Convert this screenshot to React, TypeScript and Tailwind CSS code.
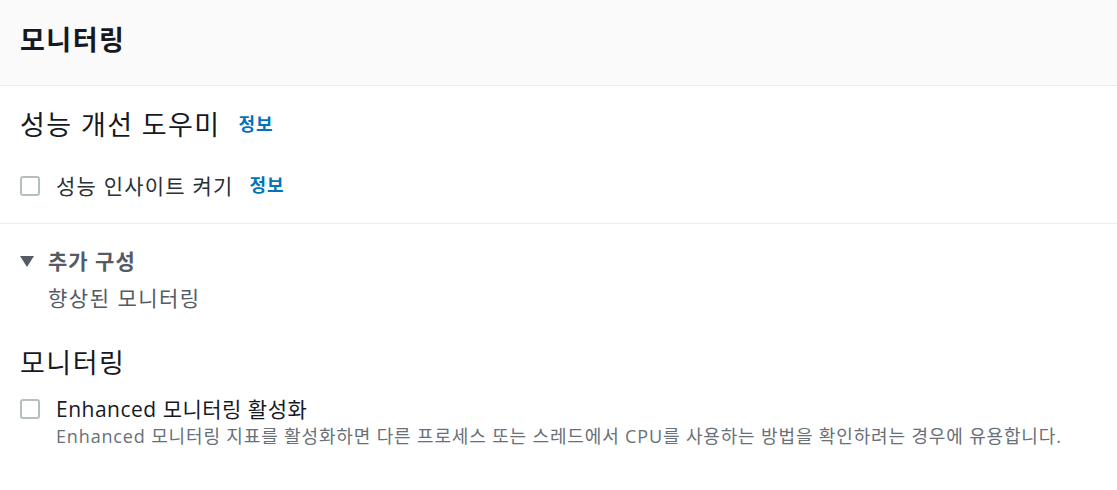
import React from "react";

const font = { fontFamily: '"Open Sans", "Noto Sans CJK KR", sans-serif' };

function Checkbox() {
    return <span className="block w-[20px] h-[20px] rounded-[3px] border-2 border-[#b4bfc0] bg-white shrink-0" />;
}

function InfoLink() {
    return <a className="text-[18px] font-bold text-[#0073bb] leading-none tracking-[1px] cursor-pointer">정보</a>;
}

export default function App() {
    return (
        <div className="w-[1117px] h-[490px] bg-white text-[#16191f]" style={font}>
            <div className="h-[86px] bg-[#fafafa] border-b border-[#eaeded] px-5 flex items-center pb-[6px]">
                <h2 className="text-[27px] font-bold leading-none tracking-[1.5px]">모니터링</h2>
            </div>

            <div className="px-5">
                <div className="h-[76px] flex items-center gap-[18px]">
                    <h3 className="text-[27px] leading-none tracking-[1.4px]">성능 개선 도우미</h3>
                    <InfoLink />
                </div>
                <div className="h-[48px] flex items-center">
                    <Checkbox />
                    <span className="ml-[16px] text-[21px] leading-none tracking-[1.2px] text-[#2b2f36]">성능 인사이트 켜기</span>
                    <span className="ml-4">
                        <InfoLink />
                    </span>
                </div>
            </div>

            <div className="mt-[13px] border-t border-[#eaeded]" />

            <div className="px-5">
                <div className="mt-[23px] h-[28px] flex items-center gap-[14px] text-[#545b64]">
                    <svg width="14" height="11" viewBox="0 0 14 11">
                        <polygon points="0,0 14,0 7,11" fill="#545b64" />
                    </svg>
                    <span className="text-[21px] font-bold leading-none tracking-[1px]">추가 구성</span>
                </div>
                <div className="mt-[9px] h-[28px] flex items-center pl-7 text-[21px] leading-none tracking-[1.5px] text-[#545b64]">
                    향상된 모니터링
                </div>

                <div className="mt-[32px] h-[36px] flex items-center">
                    <h3 className="text-[27px] leading-none tracking-[1.5px]">모니터링</h3>
                </div>
                <div className="mt-[16px] h-[26px] flex items-center">
                    <Checkbox />
                    <span className="ml-[16px] text-[21px] leading-none tracking-[0.5px] text-[#16191f]">Enhanced 모니터링 활성화</span>
                </div>
                <div className="mt-[3px] h-[22px] flex items-center pl-9 text-[18px] leading-none tracking-[0.85px] text-[#687078]">
                    Enhanced 모니터링 지표를 활성화하면 다른 프로세스 또는 스레드에서 CPU를 사용하는 방법을 확인하려는 경우에 유용합니다.
                </div>
            </div>
        </div>
    );
}
